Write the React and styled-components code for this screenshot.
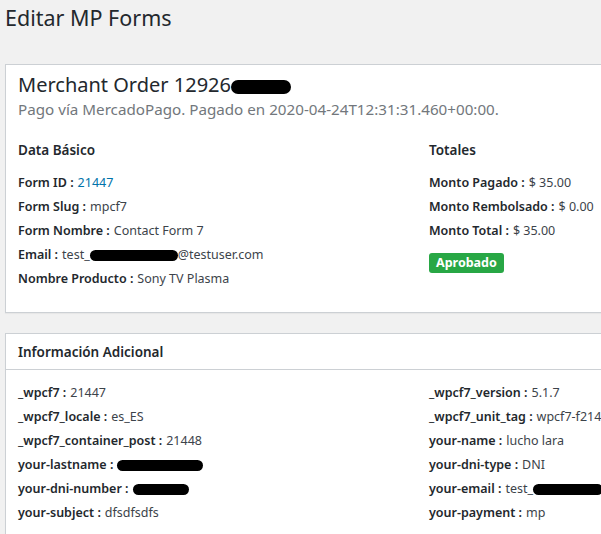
import styled, { createGlobalStyle } from "styled-components"

const GlobalStyle = createGlobalStyle`
    html, body {
        margin:0;
        padding:0;
        background:#f1f1f1;
        overflow:hidden;
    }
    body {
        font-family:"Noto Sans", "Open Sans", sans-serif;
        color:#23282d;
    }
`

const Wrap = styled.div`
    padding:0 0 0 5px;
    width:700px;
`

const PageTitle = styled.h1`
    margin:0;
    padding:3px 0 0 0;
    font-size:21.5px;
    font-weight:400;
    line-height:29px;
    color:#23282d;
`

const Panel = styled.div`
    margin-top:${props => props.top}px;
    background:#fff;
    border:1px solid #ccd0d4;
    box-shadow:0 1px 1px rgba(0,0,0,.04);
`

const Hero = styled.div`
    padding:6px 12px 0;
`

const OrderTitle = styled.h2`
    margin:0;
    font-size:20px;
    font-weight:400;
    line-height:28px;
    color:#23282d;
    display:flex;
    align-items:center;
`

const Sub = styled.p`
    margin:0;
    font-size:15.2px;
    line-height:20px;
    color:#72777c;
`

const Columns = styled.div`
    display:grid;
    grid-template-columns:411px 1fr;
    padding:${props => props.pad};
`

const Col = styled.div`
    display:flex;
    flex-direction:column;
`

const SectionTitle = styled.h3`
    margin:0 0 9px;
    font-size:13.5px;
    font-weight:600;
    line-height:24px;
    color:#23282d;
`

const Row = styled.div`
    font-size:12.5px;
    line-height:24px;
    color:#3c434a;
    display:flex;
    align-items:center;
    white-space:nowrap;
`

const Label = styled.span`
    font-weight:600;
    color:#23282d;
    margin-right:4px;
`

const Link = styled.span`
    color:#0073aa;
`

const Redact = styled.span`
    display:inline-block;
    width:${props => props.w}px;
    height:${props => props.h || 11}px;
    background:#000;
    border-radius:${props => (props.h || 11) / 2}px;
    margin:${props => props.m || "0"};
`

const Badge = styled.span`
    align-self:flex-start;
    margin-top:10px;
    background:#28a745;
    color:#fff;
    font-weight:700;
    font-size:12.5px;
    line-height:20px;
    padding:0 7px;
    border-radius:3px;
`

const PanelHead = styled.div`
    padding:0 12px;
    height:35px;
    display:flex;
    align-items:center;
    border-bottom:1px solid #ccd0d4;
`

const HeadTitle = styled.h3`
    margin:0;
    font-size:13.5px;
    font-weight:600;
    color:#23282d;
`

const Item = ({ label, children }) => (
    <Row>
        <Label>{label} :</Label>
        {children}
    </Row>
)

const App = () => {
    return (
        <>
            <GlobalStyle />
            <Wrap>
                <PageTitle>Editar MP Forms</PageTitle>
                <Panel top={32}>
                    <Hero>
                        <OrderTitle>
                            Merchant Order 12926
                            <Redact w={60} h={14} m="3px 0 0 0" />
                        </OrderTitle>
                        <Sub>Pago vía MercadoPago. Pagado en 2020-04-24T12:31:31.460+00:00.</Sub>
                    </Hero>
                    <Columns pad="19px 12px 21px">
                        <Col>
                            <SectionTitle>Data Básico</SectionTitle>
                            <Item label="Form ID"><Link>21447</Link></Item>
                            <Item label="Form Slug">mpcf7</Item>
                            <Item label="Form Nombre">Contact Form 7</Item>
                            <Row>
                                <Label>Email :</Label>
                                test_<Redact w={88} />@testuser.com
                            </Row>
                            <Item label="Nombre Producto">Sony TV Plasma</Item>
                        </Col>
                        <Col>
                            <SectionTitle>Totales</SectionTitle>
                            <Item label="Monto Pagado">$ 35.00</Item>
                            <Item label="Monto Rembolsado">$ 0.00</Item>
                            <Item label="Monto Total">$ 35.00</Item>
                            <Badge>Aprobado</Badge>
                        </Col>
                    </Columns>
                </Panel>
                <Panel top={20}>
                    <PanelHead>
                        <HeadTitle>Información Adicional</HeadTitle>
                    </PanelHead>
                    <Columns pad="11px 12px 12px">
                        <Col>
                            <Item label="_wpcf7">21447</Item>
                            <Item label="_wpcf7_locale">es_ES</Item>
                            <Item label="_wpcf7_container_post">21448</Item>
                            <Item label="your-lastname"><Redact w={86} /></Item>
                            <Item label="your-dni-number"><Redact w={56} /></Item>
                            <Item label="your-subject">dfsdfsdfs</Item>
                        </Col>
                        <Col>
                            <Item label="_wpcf7_version">5.1.7</Item>
                            <Item label="_wpcf7_unit_tag">wpcf7-f21447-o1</Item>
                            <Item label="your-name">lucho lara</Item>
                            <Item label="your-dni-type">DNI</Item>
                            <Item label="your-email">test_<Redact w={70} />@testuser.com</Item>
                            <Item label="your-payment">mp</Item>
                        </Col>
                    </Columns>
                </Panel>
            </Wrap>
        </>
    )
}

export default App
